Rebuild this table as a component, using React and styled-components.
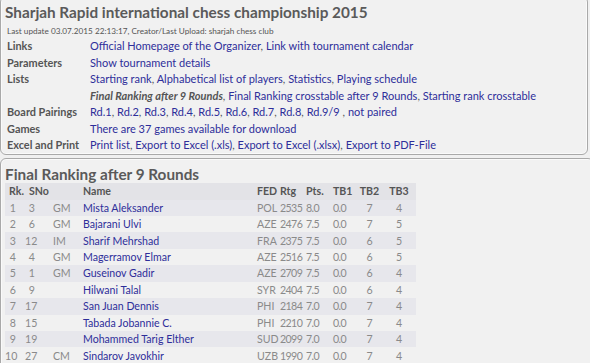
import React from "react";
import styled, { createGlobalStyle } from "styled-components";

const Global = createGlobalStyle`
  html, body { margin: 0; padding: 0; background: #f0f0f0; }
  body { font-family: Lato, "Noto Sans", sans-serif; font-size: 11px; color: #555; overflow: hidden; }
`;

const Page = styled.div`
  display: flex;
  flex-direction: column;
  gap: 3px;
  margin-top: -4px;
  width: 594px;
`;

const Box = styled.section`
  border: 1px solid #a9a9a9;
  box-shadow: inset 0 0 0 1px #fafafa;
  border-radius: 6px;
  background: #f1f1f1;
  padding: ${(p) => p.$pad};
  margin-right: ${(p) => p.$mr || "0"};
`;

const Title = styled.h2`
  margin: 0;
  font-size: 15.3px;
  font-weight: 700;
  color: #5a5a5a;
  line-height: ${(p) => p.$lh || "20px"};
`;

const Sub = styled.div`
  font-size: 8.2px;
  color: #555;
  line-height: 13px;
  padding-left: 2px;
  margin-top: 3px;
`;

const InfoGrid = styled.div`
  display: grid;
  grid-template-columns: 83px 1fr;
  padding-left: 2px;
`;

const Label = styled.div`
  font-weight: 700;
  color: #555;
  line-height: 16.5px;
  font-size: 10.9px;
`;

const Value = styled.div`
  line-height: 16.5px;
  font-size: 11px;
  white-space: nowrap;
`;

const Link = styled.a`
  color: #2e2e9a;
  text-decoration: none;
`;

const Current = styled.span`
  font-weight: 700;
  font-style: italic;
  color: #555;
`;

const Table = styled.table`
  border-collapse: collapse;
  table-layout: fixed;
  width: 411px;
  font-size: 10.6px;
`;

const Col = styled.col`
  width: ${(p) => p.$w};
`;

const HeadRow = styled.tr`
  background: #e3e3e7;
`;

const Th = styled.th`
  font-weight: 700;
  color: #555;
  height: 17px;
  padding: 0 ${(p) => p.$pr || "0"} 0 ${(p) => p.$pl || "3px"};
  text-align: ${(p) => p.$align || "left"};
  white-space: nowrap;
`;

const Row = styled.tr`
  background: ${(p) => (p.$odd ? "#e7e7ec" : "transparent")};
`;

const Td = styled.td`
  color: #8a8a8a;
  height: 16.45px;
  padding: 0 ${(p) => p.$pr || "0"} 0 ${(p) => p.$pl || "3px"};
  text-align: ${(p) => p.$align || "left"};
  white-space: nowrap;
  letter-spacing: ${(p) => (p.$num ? "-0.6px" : "0")};
`;

const players = [
  [1, 3, "GM", "Mista Aleksander", "POL", 2535, "8.0", "0.0", 7, 4],
  [2, 6, "GM", "Bajarani Ulvi", "AZE", 2476, "7.5", "0.0", 7, 5],
  [3, 12, "IM", "Sharif Mehrshad", "FRA", 2375, "7.5", "0.0", 6, 5],
  [4, 4, "GM", "Magerramov Elmar", "AZE", 2516, "7.5", "0.0", 6, 5],
  [5, 1, "GM", "Guseinov Gadir", "AZE", 2709, "7.5", "0.0", 6, 4],
  [6, 9, "", "Hilwani Talal", "SYR", 2404, "7.5", "0.0", 6, 4],
  [7, 17, "", "San Juan Dennis", "PHI", 2184, "7.0", "0.0", 7, 4],
  [8, 15, "", "Tabada Jobannie C.", "PHI", 2210, "7.0", "0.0", 7, 4],
  [9, 19, "", "Mohammed Tarig Elther", "SUD", 2099, "7.0", "0.0", 7, 4],
  [10, 27, "CM", "Sindarov Javokhir", "UZB", 1990, "7.0", "0.0", 7, 4],
];

const rounds = ["Rd.1", "Rd.2", "Rd.3", "Rd.4", "Rd.5", "Rd.6", "Rd.7", "Rd.8", "Rd.9/9"];
const colWidths = ["20px", "23px", "32px", "175px", "23px", "25px", "27px", "27px", "25px", "34px"];

export default function App() {
  return (
    <>
      <Global />
      <Page>
        <Box $pad="5px 4px 0 4px" $mr="6px">
          <Title>Sharjah Rapid international chess championship 2015</Title>
          <Sub>Last update 03.07.2015 22:13:17, Creator/Last Upload: sharjah chess club</Sub>
          <InfoGrid>
            <Label>Links</Label>
            <Value>
              <Link href="#">Official Homepage of the Organizer</Link>, <Link href="#">Link with tournament calendar</Link>
            </Value>
            <Label>Parameters</Label>
            <Value><Link href="#">Show tournament details</Link></Value>
            <Label>Lists</Label>
            <Value>
              <Link href="#">Starting rank</Link>, <Link href="#">Alphabetical list of players</Link>, <Link href="#">Statistics</Link>, <Link href="#">Playing schedule</Link>
            </Value>
            <Label></Label>
            <Value>
              <Current>Final Ranking after 9 Rounds</Current>, <Link href="#">Final Ranking crosstable after 9 Rounds</Link>, <Link href="#">Starting rank crosstable</Link>
            </Value>
            <Label>Board Pairings</Label>
            <Value>
              {rounds.map((r, i) => (
                <React.Fragment key={r}>
                  <Link href="#">{r}</Link>{i < rounds.length - 1 ? ", " : " "}
                </React.Fragment>
              ))}
              , <Link href="#">not paired</Link>
            </Value>
            <Label>Games</Label>
            <Value><Link href="#">There are 37 games available for download</Link></Value>
            <Label>Excel and Print</Label>
            <Value>
              <Link href="#">Print list</Link>, <Link href="#">Export to Excel (.xls)</Link>, <Link href="#">Export to Excel (.xlsx)</Link>, <Link href="#">Export to PDF-File</Link>
            </Value>
          </InfoGrid>
        </Box>
        <Box $pad="6px 4px 4px 4px">
          <Title $lh="18px">Final Ranking after 9 Rounds</Title>
          <Table>
            <colgroup>
              {colWidths.map((w, i) => (
                <Col key={i} $w={w} />
              ))}
            </colgroup>
            <thead>
              <HeadRow>
                <Th $pl="4px">Rk.</Th>
                <Th $pl="4px">SNo</Th>
                <Th></Th>
                <Th>Name</Th>
                <Th $pl="2px">FED</Th>
                <Th $pl="2px">Rtg</Th>
                <Th>Pts.</Th>
                <Th>TB1</Th>
                <Th $align="center" $pl="0">TB2</Th>
                <Th $align="center" $pl="0">TB3</Th>
              </HeadRow>
            </thead>
            <tbody>
              {players.map((p, i) => (
                <Row key={p[0]} $odd={i % 2 === 0}>
                  <Td $align="right" $pr="9px" $pl="0">{p[0]}</Td>
                  <Td $align="right" $pr="13px" $pl="0">{p[1]}</Td>
                  <Td $pl="5px">{p[2]}</Td>
                  <Td><Link href="#">{p[3]}</Link></Td>
                  <Td $pl="2px">{p[4]}</Td>
                  <Td $pl="2px" $num>{p[5]}</Td>
                  <Td $num>{p[6]}</Td>
                  <Td $num>{p[7]}</Td>
                  <Td $align="center" $pl="0">{p[8]}</Td>
                  <Td $align="center" $pl="0">{p[9]}</Td>
                </Row>
              ))}
            </tbody>
          </Table>
        </Box>
      </Page>
    </>
  );
}
